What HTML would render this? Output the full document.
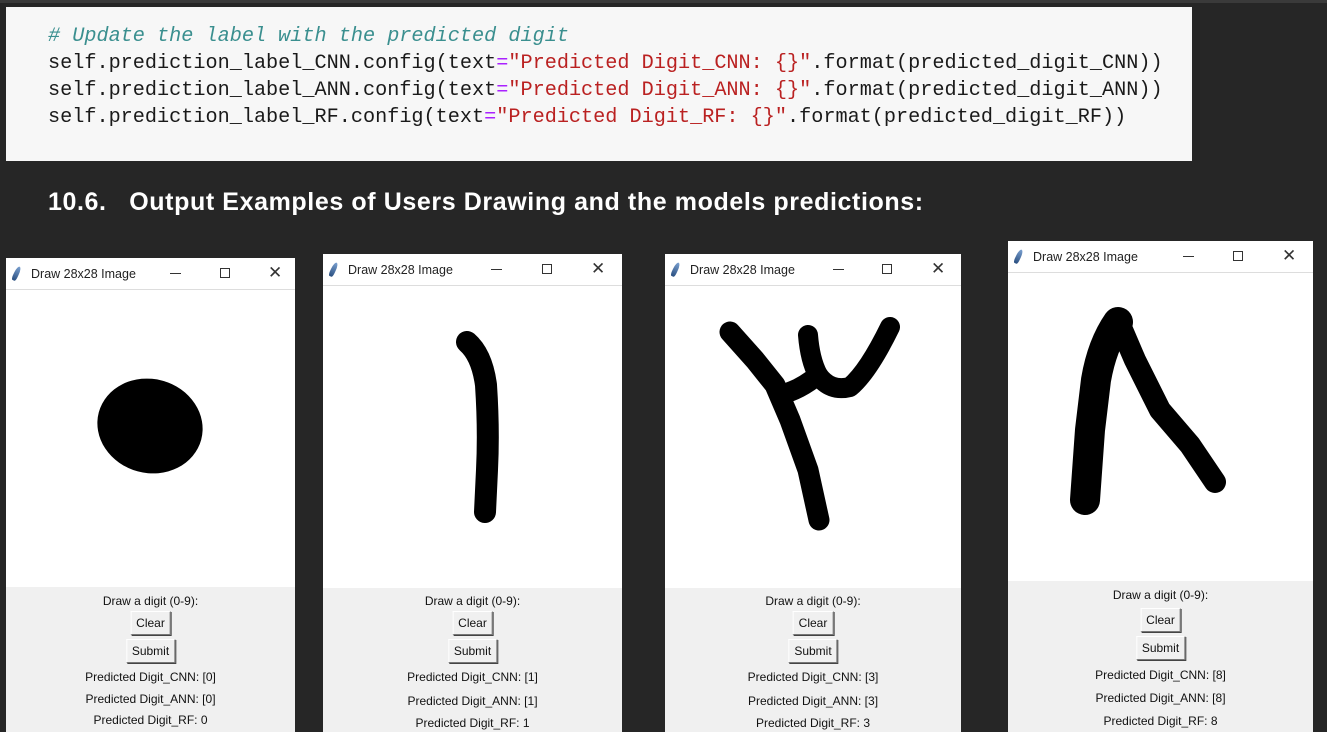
<!DOCTYPE html>
<html><head><meta charset="utf-8"><style>
*{margin:0;padding:0;box-sizing:border-box}
body{width:1327px;height:732px;background:#262626;position:relative;overflow:hidden;font-family:"Liberation Sans",sans-serif}
.code{position:absolute;left:6px;top:7px;width:1186px;height:154px;background:#f7f7f7}
.code pre{position:absolute;left:42px;top:16px;font-family:"Liberation Mono",monospace;font-size:20.2px;line-height:27px;color:#1a1a1a}
.cm{color:#3a8f8f;font-style:italic}.s{color:#ba2121}.o{color:#aa22ff}
h2{position:absolute;left:48px;top:188px;color:#fff;font-size:25px;font-weight:bold;white-space:pre;letter-spacing:0.6px}
.win{position:absolute;background:#fff;overflow:hidden}
.tb{position:absolute;left:0;top:0;right:0;height:32px;border-bottom:1px solid #ddd;font-size:12.5px;color:#222}
.tb .t{position:absolute;left:25px;top:9px}
.tb .f{position:absolute;left:8px;top:8px;width:5px;height:15px;background:linear-gradient(#7aa0d0,#2a4f80);border-radius:50% 50% 30% 30%;transform:rotate(25deg)}
.tb .mn{position:absolute;top:15px;width:11px;height:1px;background:#333}
.tb .mx{position:absolute;top:10px;width:10px;height:10px;border:1px solid #333}
.tb .x{position:absolute;top:5px;font-size:17px;color:#333}
.bot{position:absolute;left:0;right:0;bottom:0;background:#f0f0f0;font-size:12px;color:#111;text-align:center}
.bot div{position:absolute;left:0;right:0}
.btn{position:absolute;left:50%;transform:translateX(-50%);background:#f0f0f0;border:1px solid;border-color:#fff #777 #777 #fff;box-shadow:1px 1px 0 #444;padding:4px 5px;font-size:12px}
svg{position:absolute;left:0;top:0}
</style></head><body>
<div style="position:absolute;left:0;top:0;width:1327px;height:3px;background:#3a3a3a"></div>
<div class="code"><pre><span class="cm"># Update the label with the predicted digit</span>
self.prediction_label_CNN.config(text<span class="o">=</span><span class="s">"Predicted Digit_CNN: {}"</span>.format(predicted_digit_CNN))
self.prediction_label_ANN.config(text<span class="o">=</span><span class="s">"Predicted Digit_ANN: {}"</span>.format(predicted_digit_ANN))
self.prediction_label_RF.config(text<span class="o">=</span><span class="s">"Predicted Digit_RF: {}"</span>.format(predicted_digit_RF))</pre></div>
<h2>10.6.   Output Examples of Users Drawing and the models predictions:</h2>

<!-- W1 -->
<div class="win" style="left:6px;top:258px;width:289px;height:474px">
<div class="tb"><span class="f"></span><span class="t">Draw 28x28 Image</span><span class="mn" style="left:164px"></span><span class="mx" style="left:214px"></span><span class="x" style="left:262px">✕</span></div>
<div class="bot" style="top:329px">
<div style="top:7px">Draw a digit (0-9):</div>
<span class="btn" style="top:24px">Clear</span>
<span class="btn" style="top:52px">Submit</span>
<div style="top:83px">Predicted Digit_CNN: [0]</div>
<div style="top:105px">Predicted Digit_ANN: [0]</div>
<div style="top:126px">Predicted Digit_RF: 0</div>
</div></div>

<!-- W2 -->
<div class="win" style="left:323px;top:254px;width:299px;height:478px">
<div class="tb"><span class="f"></span><span class="t">Draw 28x28 Image</span><span class="mn" style="left:168px"></span><span class="mx" style="left:219px"></span><span class="x" style="left:268px">✕</span></div>
<div class="bot" style="top:334px">
<div style="top:6px">Draw a digit (0-9):</div>
<span class="btn" style="top:23px">Clear</span>
<span class="btn" style="top:51px">Submit</span>
<div style="top:82px">Predicted Digit_CNN: [1]</div>
<div style="top:106px">Predicted Digit_ANN: [1]</div>
<div style="top:128px">Predicted Digit_RF: 1</div>
</div></div>

<!-- W3 -->
<div class="win" style="left:665px;top:254px;width:296px;height:478px">
<div class="tb"><span class="f"></span><span class="t">Draw 28x28 Image</span><span class="mn" style="left:168px"></span><span class="mx" style="left:217px"></span><span class="x" style="left:266px">✕</span></div>
<div class="bot" style="top:334px">
<div style="top:6px">Draw a digit (0-9):</div>
<span class="btn" style="top:23px">Clear</span>
<span class="btn" style="top:51px">Submit</span>
<div style="top:82px">Predicted Digit_CNN: [3]</div>
<div style="top:106px">Predicted Digit_ANN: [3]</div>
<div style="top:128px">Predicted Digit_RF: 3</div>
</div></div>

<!-- W4 -->
<div class="win" style="left:1008px;top:241px;width:305px;height:491px">
<div class="tb"><span class="f"></span><span class="t">Draw 28x28 Image</span><span class="mn" style="left:175px"></span><span class="mx" style="left:225px"></span><span class="x" style="left:274px">✕</span></div>
<div class="bot" style="top:340px">
<div style="top:7px">Draw a digit (0-9):</div>
<span class="btn" style="top:27px">Clear</span>
<span class="btn" style="top:55px">Submit</span>
<div style="top:87px">Predicted Digit_CNN: [8]</div>
<div style="top:110px">Predicted Digit_ANN: [8]</div>
<div style="top:133px">Predicted Digit_RF: 8</div>
</div></div>

<svg width="1327" height="732" fill="none" stroke="#000" stroke-linecap="round" stroke-linejoin="round">
<ellipse cx="150" cy="426" rx="53" ry="47" fill="#000" stroke="none" transform="rotate(15 150 426)"/>
<path d="M467 342 Q482 355 486 385 Q489 430 487 470 L485 512" stroke-width="22"/>
<path d="M730 332 L755 360 L775 385 L790 420 L808 470 L819 520" stroke-width="21"/>
<path d="M780 395 Q800 390 818 375 Q830 392 850 387 Q868 372 890 327" stroke-width="20"/>
<path d="M808 335 Q810 360 818 375" stroke-width="20"/>
<path d="M1118 322 Q1102 345 1096 380 L1090 430 L1085 500" stroke-width="30"/>
<path d="M1120 325 L1135 360 L1160 410 L1190 445 L1215 482" stroke-width="22"/>
</svg>
</body></html>
